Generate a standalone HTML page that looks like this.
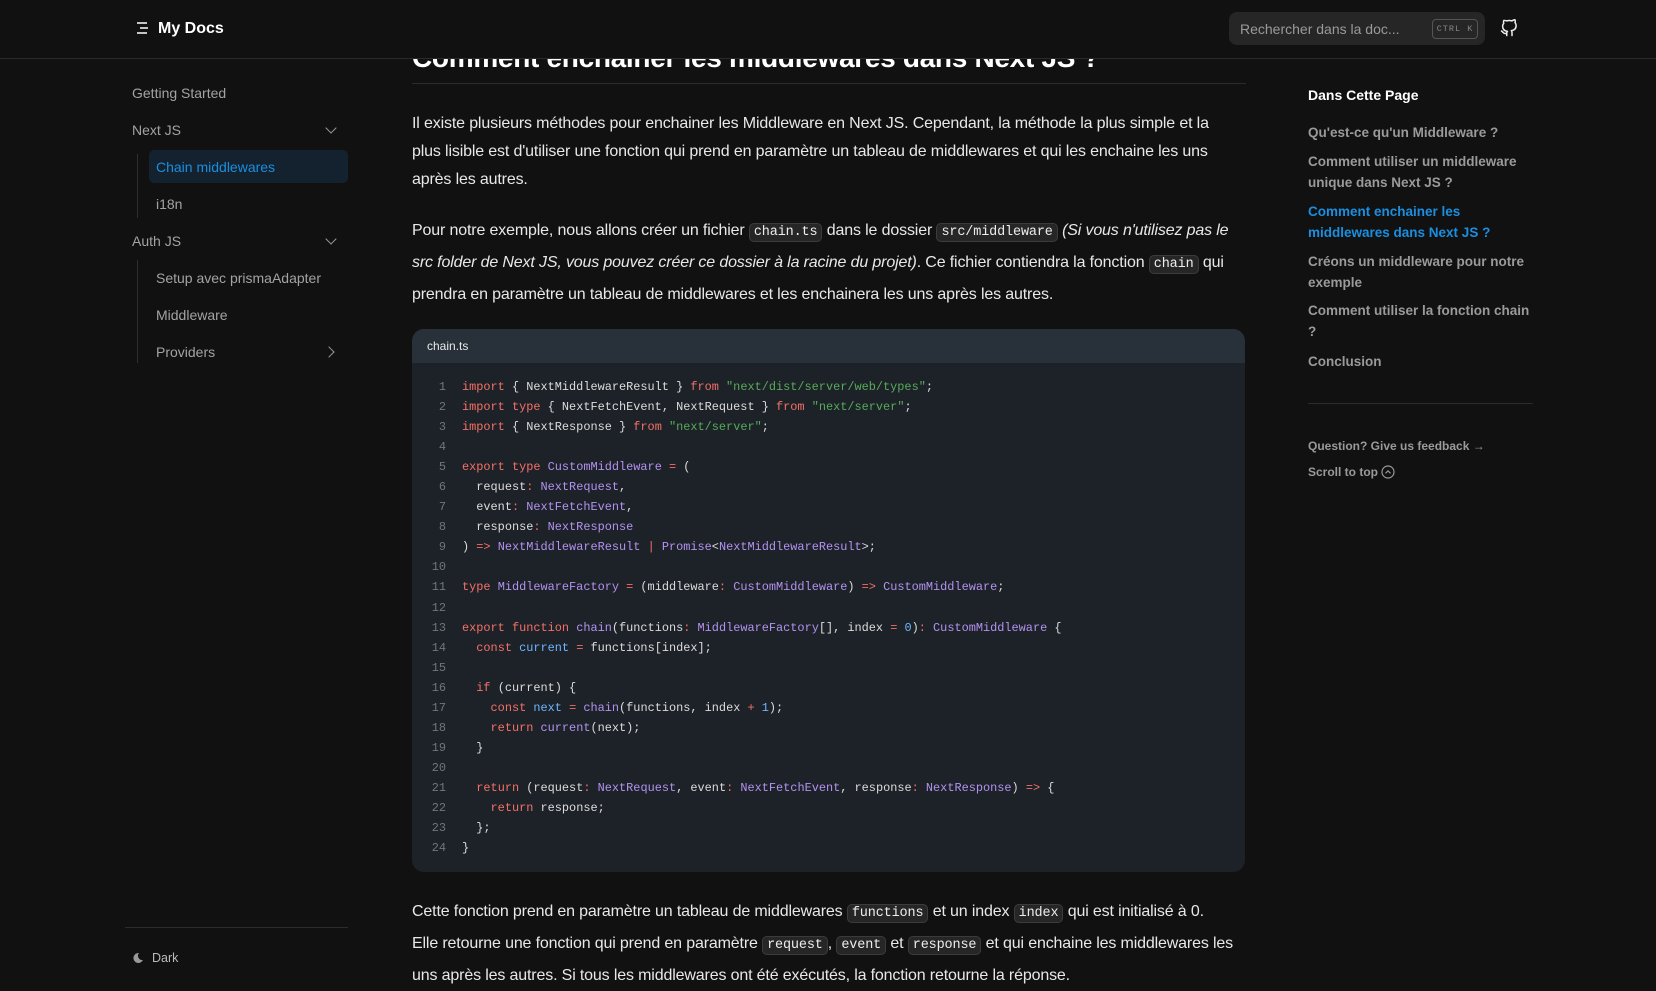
<!DOCTYPE html>
<html><head><meta charset="utf-8"><style>
*{box-sizing:border-box;margin:0;padding:0}
body{width:1656px;height:984px;overflow:hidden;background:#111;font-family:"Liberation Sans",sans-serif;color:#e6e6e6;position:relative}
.hdr{position:absolute;left:0;top:0;width:1656px;height:59px;background:#111;border-bottom:1px solid #2b2b2b;z-index:5}
.hdr .logo{position:absolute;left:137px;top:20px;font-weight:bold;font-size:16px;color:#fff}
.search{position:absolute;left:1229px;top:12px;width:256px;height:33px;background:#262626;border-radius:8px;color:#9a9a9a;font-size:14px;padding:9px 11px}
.kbd{position:absolute;right:7px;top:7px;width:46px;height:20px;border:1px solid #555;border-radius:4px;font-size:8.5px;color:#888;text-align:center;line-height:18px;letter-spacing:1px;font-family:"Liberation Mono",monospace}
.side{position:absolute;left:132px;font-size:14px;color:#a3a3a3}
.chev{position:absolute;left:327px;width:8px;height:8px;border-right:1.5px solid #999;border-bottom:1.5px solid #999}
.vl{position:absolute;left:137px;width:1px;background:#2e2e2e}
.h1{position:absolute;left:412px;top:42px;font-size:28px;font-weight:bold;color:#fff;letter-spacing:-.3px;white-space:nowrap}
.hr{position:absolute;left:412px;top:83px;width:834px;height:1px;background:#2b2b2b}
p.t{position:absolute;left:412px;width:834px;font-size:16px;color:#e8e8e8;letter-spacing:-.15px}
code.i{font-family:"Liberation Mono",monospace;font-size:13.5px;background:#262626;border:1px solid #3b3b3b;border-radius:5px;padding:1px 4px;color:#ededed}
.cb{position:absolute;left:412px;top:329px;width:833px;height:543px;background:#1d2228;border-radius:12px;overflow:hidden}
.cbh{height:34px;background:#28313a;font-size:12px;color:#e8e8e8;padding:10px 15px}
.code{position:absolute;left:0;top:48px;font-family:"Liberation Mono",monospace;font-size:11.9px;line-height:20.05px;color:#dcdcdc;white-space:pre}
.ln{display:inline-block;width:34px;text-align:right;color:#6e7681;margin-right:16px}
.k{color:#f47067}.s{color:#57ab5a}.y{color:#b392f0}.b{color:#6cb6ff}
.toc{position:absolute;left:1308px;width:225px;font-size:13.5px;font-weight:bold;color:#9a9a9a;line-height:21px}
</style></head><body>
<div class="hdr">
 <svg style="position:absolute;left:136px;top:21px" width="14" height="14" viewBox="0 0 14 14"><path d="M1 2h10M4 7h8M1 12h10" stroke="#ddd" stroke-width="1.8"/></svg>
 <div class="logo" style="left:158px">My Docs</div>
 <div class="search">Rechercher dans la doc...<div class="kbd">CTRL K</div></div>
 <svg style="position:absolute;left:1500px;top:19px" width="18" height="18" viewBox="0 0 24 24" fill="none" stroke="#eee" stroke-width="2" stroke-linecap="round" stroke-linejoin="round"><path d="M9 19c-5 1.5-5-2.5-7-3m14 6v-3.9a3.4 3.4 0 0 0-.9-2.6c3.1-.3 6.4-1.5 6.4-7a5.4 5.4 0 0 0-1.5-3.7 5 5 0 0 0-.1-3.8s-1.2-.3-3.9 1.5a13.4 13.4 0 0 0-7 0C6.3 1.7 5.1 2 5.1 2a5 5 0 0 0-.1 3.8A5.4 5.4 0 0 0 3.5 9.5c0 5.4 3.3 6.6 6.4 7a3.4 3.4 0 0 0-.9 2.6V22"/></svg>
</div>
<div class="h1">Comment enchainer les middlewares dans Next JS ?</div>
<div class="hr"></div>

<div class="side" style="top:85px">Getting Started</div>
<div class="side" style="top:122px">Next JS</div><div class="chev" style="top:124px;transform:rotate(45deg)"></div>
<div class="vl" style="top:154px;height:64px"></div>
<div style="position:absolute;left:149px;top:150px;width:199px;height:33px;background:#14212e;border-radius:5px"></div>
<div class="side" style="left:156px;top:159px;color:#1a8fe0">Chain middlewares</div>
<div class="side" style="left:156px;top:196px">i18n</div>
<div class="side" style="top:233px">Auth JS</div><div class="chev" style="top:235px;transform:rotate(45deg)"></div>
<div class="vl" style="top:260px;height:103px"></div>
<div class="side" style="left:156px;top:270px">Setup avec prismaAdapter</div>
<div class="side" style="left:156px;top:307px">Middleware</div>
<div class="side" style="left:156px;top:344px">Providers</div><div class="chev" style="top:348px;left:325px;transform:rotate(-45deg)"></div>
<div style="position:absolute;left:125px;top:927px;width:223px;height:1px;background:#2b2b2b"></div>
<svg style="position:absolute;left:132px;top:952px" width="12" height="12" viewBox="0 0 12 12"><path d="M7 1a5 5 0 1 0 4 7A4.3 4.3 0 0 1 7 1z" fill="#999"/></svg>
<div class="side" style="left:152px;top:951px;font-size:12.5px;color:#bbb">Dark</div>

<p class="t" style="top:110px;line-height:28px;width:812px">Il existe plusieurs méthodes pour enchainer les Middleware en Next JS. Cependant, la méthode la plus simple et la plus lisible est d'utiliser une fonction qui prend en paramètre un tableau de middlewares et qui les enchaine les uns après les autres.</p>
<p class="t" style="top:216px;line-height:30px">Pour notre exemple, nous allons créer un fichier <code class="i">chain.ts</code> dans le dossier <code class="i">src/middleware</code> <i>(Si vous n'utilisez pas le src folder de Next JS, vous pouvez créer ce dossier à la racine du projet)</i>. Ce fichier contiendra la fonction <code class="i">chain</code> qui prendra en paramètre un tableau de middlewares et les enchainera les uns après les autres.</p>

<div class="cb"><div class="cbh">chain.ts</div>
<div class="code"><span class="ln">1</span><span class="k">import</span> { NextMiddlewareResult } <span class="k">from</span> <span class="s">"next/dist/server/web/types"</span>;
<span class="ln">2</span><span class="k">import</span> <span class="k">type</span> { NextFetchEvent, NextRequest } <span class="k">from</span> <span class="s">"next/server"</span>;
<span class="ln">3</span><span class="k">import</span> { NextResponse } <span class="k">from</span> <span class="s">"next/server"</span>;
<span class="ln">4</span>
<span class="ln">5</span><span class="k">export</span> <span class="k">type</span> <span class="y">CustomMiddleware</span> <span class="k">=</span> (
<span class="ln">6</span>  request<span class="k">:</span> <span class="y">NextRequest</span>,
<span class="ln">7</span>  event<span class="k">:</span> <span class="y">NextFetchEvent</span>,
<span class="ln">8</span>  response<span class="k">:</span> <span class="y">NextResponse</span>
<span class="ln">9</span>) <span class="k">=&gt;</span> <span class="y">NextMiddlewareResult</span> <span class="k">|</span> <span class="y">Promise</span>&lt;<span class="y">NextMiddlewareResult</span>&gt;;
<span class="ln">10</span>
<span class="ln">11</span><span class="k">type</span> <span class="y">MiddlewareFactory</span> <span class="k">=</span> (middleware<span class="k">:</span> <span class="y">CustomMiddleware</span>) <span class="k">=&gt;</span> <span class="y">CustomMiddleware</span>;
<span class="ln">12</span>
<span class="ln">13</span><span class="k">export</span> <span class="k">function</span> <span class="y">chain</span>(functions<span class="k">:</span> <span class="y">MiddlewareFactory</span>[], index <span class="k">=</span> <span class="b">0</span>)<span class="k">:</span> <span class="y">CustomMiddleware</span> {
<span class="ln">14</span>  <span class="k">const</span> <span class="b">current</span> <span class="k">=</span> functions[index];
<span class="ln">15</span>
<span class="ln">16</span>  <span class="k">if</span> (current) {
<span class="ln">17</span>    <span class="k">const</span> <span class="b">next</span> <span class="k">=</span> <span class="y">chain</span>(functions, index <span class="k">+</span> <span class="b">1</span>);
<span class="ln">18</span>    <span class="k">return</span> <span class="y">current</span>(next);
<span class="ln">19</span>  }
<span class="ln">20</span>
<span class="ln">21</span>  <span class="k">return</span> (request<span class="k">:</span> <span class="y">NextRequest</span>, event<span class="k">:</span> <span class="y">NextFetchEvent</span>, response<span class="k">:</span> <span class="y">NextResponse</span>) <span class="k">=&gt;</span> {
<span class="ln">22</span>    <span class="k">return</span> response;
<span class="ln">23</span>  };
<span class="ln">24</span>}</div></div>

<p class="t" style="top:897px;line-height:30px">Cette fonction prend en paramètre un tableau de middlewares <code class="i">functions</code> et un index <code class="i">index</code> qui est initialisé à 0.<br>Elle retourne une fonction qui prend en paramètre <code class="i">request</code>, <code class="i">event</code> et <code class="i">response</code> et qui enchaine les middlewares les uns après les autres. Si tous les middlewares ont été exécutés, la fonction retourne la réponse.</p>

<div class="toc" style="top:85px;color:#fff;font-size:14px">Dans Cette Page</div>
<div class="toc" style="top:122px">Qu'est-ce qu'un Middleware ?</div>
<div class="toc" style="top:151px">Comment utiliser un middleware unique dans Next JS ?</div>
<div class="toc" style="top:201px;color:#1a8fe0;width:215px">Comment enchainer les middlewares dans Next JS ?</div>
<div class="toc" style="top:251px">Créons un middleware pour notre exemple</div>
<div class="toc" style="top:300px">Comment utiliser la fonction chain ?</div>
<div class="toc" style="top:351px">Conclusion</div>
<div style="position:absolute;left:1308px;top:403px;width:225px;height:1px;background:#2b2b2b"></div>
<div class="toc" style="top:436px;font-size:12px">Question? Give us feedback →</div>
<div class="toc" style="top:462px;font-size:12px">Scroll to top <svg style="vertical-align:-3px" width="14" height="14" viewBox="0 0 14 14"><circle cx="7" cy="7" r="6" fill="none" stroke="#999" stroke-width="1.2"/><path d="M4.5 8.3L7 5.8l2.5 2.5" fill="none" stroke="#999" stroke-width="1.2"/></svg></div>
</body></html>
